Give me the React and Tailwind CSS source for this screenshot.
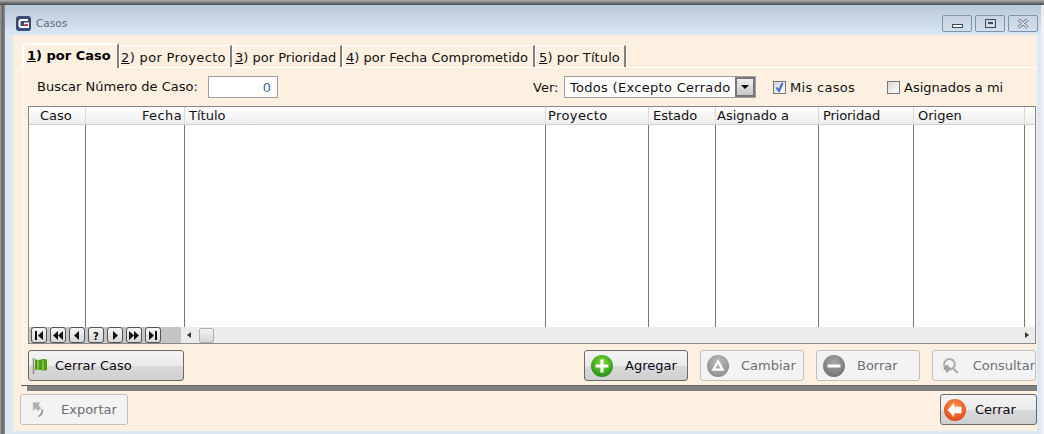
import React from "react";

const font = { fontFamily: '"DejaVu Sans", Verdana, sans-serif' };

const columns = [
  { label: "Caso", w: "w-[57px]", cls: "pl-[11px]" },
  { label: "Fecha", w: "w-[99px]", cls: "justify-end pr-[2px] tracking-[0.4px]" },
  { label: "Título", w: "w-[361px]", cls: "pl-[4px]" },
  { label: "Proyecto", w: "w-[103px]", cls: "pl-[2px] tracking-[0.4px]" },
  { label: "Estado", w: "w-[67px]", cls: "pl-[4px]" },
  { label: "Asignado a", w: "w-[103px]", cls: "pl-[1px]" },
  { label: "Prioridad", w: "w-[95px]", cls: "pl-[4px] tracking-[-0.1px]" },
  { label: "Origen", w: "w-[111px]", cls: "pl-[4px]" },
];

const Tab = ({ n, label, w, cls }) => (
  <div className={`${w} ${cls} h-[22px] mt-[10px] pt-[2px] flex items-center bg-[#fdf0e0] border-t border-l border-white border-r-2 border-r-[#808080] text-[13px] text-[#111] whitespace-nowrap`}>
    <span>
      <span className="underline">{n}</span>) {label}
    </span>
  </div>
);

const NavBtn = ({ children }) => (
  <div className="w-[16px] h-[16px] mr-[3px] bg-gradient-to-b from-[#f6f6f6] to-[#d8d8d8] border border-[#555] rounded-[3px] flex items-center justify-center">
    <svg width="10" height="9" viewBox="0 0 10 9" fill="#111">{children}</svg>
  </div>
);

const Btn = ({ w, label, icon, disabled, gap = "pl-[6px]", textCls }) => (
  <div
    className={`${w} h-[31px] ${gap} flex items-center rounded-[3px] border text-[13px] whitespace-nowrap overflow-hidden ${
      disabled
        ? "border-[#c0c0c0] bg-[#f3f3f3] text-[#6e6e78]"
        : "border-[#6a6a6a] bg-[linear-gradient(#f4f4f4,#ebebeb_50%,#dadada_50%,#cfcfcf)] text-[#0a0a14]"
    }`}
  >
    {icon}
    <span className={textCls}>{label}</span>
  </div>
);

const Circle = ({ from, to, children }) => (
  <svg width="22" height="22" viewBox="0 0 24 24">
    <defs>
      <radialGradient id={from.slice(1)} cx="50%" cy="35%" r="70%">
        <stop offset="0%" stopColor={from} />
        <stop offset="100%" stopColor={to} />
      </radialGradient>
    </defs>
    <circle cx="12" cy="12" r="12" fill={`url(#${from.slice(1)})`} />
    {children}
  </svg>
);

const winBtn = "w-[30px] h-[17px] rounded-[2px] border border-[#7d95ab] bg-gradient-to-b from-[#c6d3e0] to-[#d3e0ec] flex items-center justify-center";

export default function App() {
  return (
    <div style={font} className="w-[1044px] h-[434px] overflow-hidden bg-white flex flex-col">
      <div className="h-[5px] bg-gradient-to-b from-[#b0b0b0] to-[#4a4a4a] shrink-0" />
      <div className="flex-1 flex min-h-0">
        <div className="w-[5px] bg-gradient-to-r from-[#a0a0a0] via-[#666] to-[#8c8c8c] shrink-0" />
        <div className="w-[1036px] flex flex-col bg-[#dce8f3]">
          {/* title bar */}
          <div className="h-[30px] shrink-0 flex items-center bg-gradient-to-b from-[#b9c8d8] to-[#dbe8f4] pt-[6px] pl-[11px] pr-[3px]">
            <svg width="15" height="15" viewBox="0 0 15 15">
              <rect x="0" y="0" width="15" height="15" rx="3" fill="#3b4a78" />
              <path d="M12 4H5.500Q3.500 4 3.500 5.500V9.500Q3.500 11 5.500 11H12V7.500H8" fill="none" stroke="#fff" strokeWidth="2" />
              <rect x="9" y="8" width="3" height="2" fill="#d8342c" />
            </svg>
            <span className="ml-[5px] mt-[1px] text-[10.5px] text-[#666c75]">Casos</span>
            <div className="ml-auto flex gap-[3px]">
              <div className={winBtn}>
                <div className="w-[11px] h-[4px] mt-[5px] border border-[#3f4a55] bg-white" />
              </div>
              <div className={winBtn}>
                <div className="w-[11px] h-[9px] border border-[#3f4a55] flex items-center justify-center">
                  <div className="w-[5px] h-[2px] bg-[#3f4a55]" />
                </div>
              </div>
              <div className={winBtn}>
                <svg width="14" height="11" viewBox="0 0 14 11">
                  <path d="M2.500 1.500L11.500 9.500M11.500 1.500L2.500 9.500" stroke="#4a5561" strokeWidth="3" />
                  <path d="M2.500 1.500L11.500 9.500M11.500 1.500L2.500 9.500" stroke="#fff" strokeWidth="1.300" />
                </svg>
              </div>
            </div>
          </div>

          {/* content */}
          <div className="flex-1 ml-[8px] mr-[4px] mb-[3px] bg-[#fdf0e0] flex flex-col min-h-0">
            <div className="flex h-[32px] pl-[9px] shrink-0 items-start">
              <div className="w-[97px] h-[25px] mt-[8px] pl-[3px] pb-[1px] flex items-center bg-[#fdf0e0] border-t-2 border-l-2 border-white border-r-2 border-r-[#808080] rounded-tl-[3px] text-[13px] font-bold text-black z-10 whitespace-nowrap">
                <span>
                  <span className="underline">1</span>) por Caso
                </span>
              </div>
              <Tab n="2" label="por Proyecto" w="w-[113px]" cls="pl-[1px] tracking-[0.35px]" />
              <Tab n="3" label="por Prioridad" w="w-[110px]" cls="pl-[2px]" />
              <Tab n="4" label="por Fecha Comprometido" w="w-[193px]" cls="pl-[3px]" />
              <Tab n="5" label="por Título" w="w-[91px]" cls="pl-[3px] tracking-[0.1px]" />
            </div>
            <div className="ml-[9px] flex-1 flex flex-col border-t border-l border-white min-h-0">
              {/* filters */}
              <div className="h-[38px] shrink-0 flex items-center text-[13px] text-[#111]">
                <span className="ml-[14px] w-[171px] pb-[1px] mt-[1px] whitespace-nowrap">Buscar Número de Caso:</span>
                <div className="w-[70px] h-[22px] bg-white border border-[#a0a0a0] text-right pr-[6px] leading-[22px] text-[#4a6a8a]">0</div>
                <span className="ml-[255px] w-[31px] mt-[1px]">Ver:</span>
                <div className="w-[192px] h-[22px] bg-white border border-[#a0a0a0] flex items-center pl-[5px]">
                  <span className="flex-1 mt-[2px] whitespace-nowrap overflow-hidden tracking-[0.3px]">Todos (Excepto Cerrado</span>
                  <div className="w-[20px] h-[20px] border-2 border-[#777] bg-gradient-to-b from-[#f0f0f0] to-[#c8c8c8] flex items-center justify-center">
                    <div className="w-0 h-0 border-l-[4px] border-r-[4px] border-t-[4px] border-l-transparent border-r-transparent border-t-black" />
                  </div>
                </div>
                <div className="ml-[17px] w-[13px] h-[13px] mt-[1px] border border-[#777] bg-gradient-to-br from-[#d0d4e0] to-white flex items-center justify-center">
                  <svg width="11" height="11" viewBox="0 0 11 11">
                    <path d="M2.500 5.500L5 9L8.500 1" fill="none" stroke="#4a66b8" strokeWidth="2" />
                  </svg>
                </div>
                <span className="ml-[4px] mt-[2px] w-[97px] tracking-[0.3px] whitespace-nowrap">Mis casos</span>
                <div className="w-[13px] h-[13px] mt-[1px] border border-[#777] bg-gradient-to-br from-[#d8d8d8] to-white" />
                <span className="ml-[4px] mt-[2px] whitespace-nowrap">Asignados a mi</span>
              </div>

              {/* grid */}
              <div className="ml-[5px] w-[1008px] h-[238px] shrink-0 border border-[#888] bg-white flex flex-col">
                <div className="h-[18px] shrink-0 flex bg-gradient-to-b from-white to-[#ededed] border-b border-[#d0d0d0] text-[13px] text-[#111]">
                  {columns.map((c) => (
                    <div key={c.label} className={`${c.w} shrink-0 h-full pt-[1px] flex items-center whitespace-nowrap border-r border-[#d8d8d8] ${c.cls}`}>
                      {c.label}
                    </div>
                  ))}
                </div>
                <div className="flex-1 flex min-h-0">
                  {columns.map((c) => (
                    <div key={c.label} className={`${c.w} shrink-0 border-r border-[#777]`} />
                  ))}
                </div>
                <div className="h-[16px] shrink-0 flex bg-[#ececec]">
                  <div className="w-[152px] bg-[#c4c4c4] flex items-center pl-[2px] shrink-0">
                    <NavBtn><path d="M1 0h2v9H1zM9 0v9L4 4.500z" /></NavBtn>
                    <NavBtn><path d="M5 0v9L0 4.500zM10 0v9L5 4.500z" /></NavBtn>
                    <NavBtn><path d="M7 0v9L2 4.500z" /></NavBtn>
                    <NavBtn><text x="2" y="8.500" fontSize="10" fontWeight="bold" fontFamily="DejaVu Sans">?</text></NavBtn>
                    <NavBtn><path d="M3 0v9l5-4.500z" /></NavBtn>
                    <NavBtn><path d="M0 0v9l5-4.500zM5 0v9l5-4.500z" /></NavBtn>
                    <NavBtn><path d="M1 0v9l5-4.500zM7 0h2v9H7z" /></NavBtn>
                  </div>
                  <div className="flex-1 flex items-center">
                    <div className="ml-[6px] w-0 h-0 border-y-[3px] border-r-[4px] border-y-transparent border-r-[#333]" />
                    <div className="ml-[8px] w-[15px] h-[15px] rounded-[2px] border border-[#b0b0b0] bg-gradient-to-b from-[#f2f2f2] to-[#d6d6d6]" />
                    <div className="ml-auto mr-[6px] w-0 h-0 border-y-[3px] border-l-[4px] border-y-transparent border-l-[#333]" />
                  </div>
                </div>
              </div>

              {/* grid buttons */}
              <div className="mt-[6px] ml-[5px] flex shrink-0">
                <Btn w="w-[156px]" label="Cerrar Caso" textCls="ml-[7px]" gap="pl-[3px]" icon={
                  <svg width="16" height="18" viewBox="0 0 16 18">
                    <path d="M1.500 1V17" stroke="#8a8a8a" strokeWidth="1.500" />
                    <path d="M3 2Q6 3.500 9 2.500T15 2.500V13Q12 14 9 13T3 13Z" fill="#4f9a12" />
                    <path d="M6 3V13M11 3V13" stroke="#7cc13a" strokeWidth="2" />
                  </svg>
                } />
                <div className="ml-[400px]" />
                <Btn w="w-[104px]" label="Agregar" textCls="ml-[12px]" icon={
                  <Circle from="#7fdc3c" to="#1e8a10">
                    <path d="M12 5V19M5 12H19" stroke="#fff" strokeWidth="3.500" />
                  </Circle>
                } />
                <div className="ml-[12px]" />
                <Btn w="w-[104px]" label="Cambiar" disabled textCls="ml-[12px]" icon={
                  <Circle from="#bdbdbd" to="#8a8a8a">
                    <path d="M12 7L17 16H7Z" fill="none" stroke="#fff" strokeWidth="2.500" />
                  </Circle>
                } />
                <div className="ml-[12px]" />
                <Btn w="w-[104px]" label="Borrar" disabled textCls="ml-[12px]" icon={
                  <Circle from="#a8a8a8" to="#6f6f6f">
                    <path d="M5 12H19" stroke="#fff" strokeWidth="3.500" />
                  </Circle>
                } />
                <div className="ml-[12px]" />
                <Btn w="w-[104px]" label="Consultar" disabled textCls="ml-[14px]" gap="pl-[9px]" icon={
                  <svg width="17" height="18" viewBox="0 0 19 20" fill="none">
                    <circle cx="8.500" cy="8" r="6" stroke="#b0b0b0" strokeWidth="2.500" />
                    <path d="M13 13L18 18" stroke="#b0b0b0" strokeWidth="2.500" />
                    <path d="M6 9V17M2 13H10" stroke="#a0a0a0" strokeWidth="3" />
                  </svg>
                } />
              </div>
            </div>

            {/* footer */}
            <div className="flex h-[6px] ml-[8px] shrink-0">
              <div className="w-[6px] h-[1px] bg-[#555]" />
              <div className="flex-1 bg-[#808080] border-t border-[#666]" />
            </div>
            <div className="h-[40px] shrink-0 flex items-start pt-[3px] pl-[7px] justify-between">
              <Btn w="w-[108px]" label="Exportar" disabled textCls="ml-[16px]" gap="pl-[11px]" icon={
                <svg width="13" height="18" viewBox="0 0 14 18" fill="none">
                  <path d="M1 1H9L7 4L10 7L6 10L4 7L1 10Z" fill="#b0b0b0" />
                  <path d="M11 8Q12 13 7 16" stroke="#a0a0a0" strokeWidth="2" />
                </svg>
              } />
              <Btn w="w-[97px]" label="Cerrar" textCls="ml-[9px]" gap="pl-[3px]" icon={
                <Circle from="#ff9a4a" to="#e0401a">
                  <path d="M11 4L4 12L11 20V15.500H19V8.500H11Z" fill="#fff" />
                </Circle>
              } />
            </div>
          </div>
        </div>
        <div className="w-[3px] bg-[#eaf0f6] shrink-0" />
      </div>
    </div>
  );
}
